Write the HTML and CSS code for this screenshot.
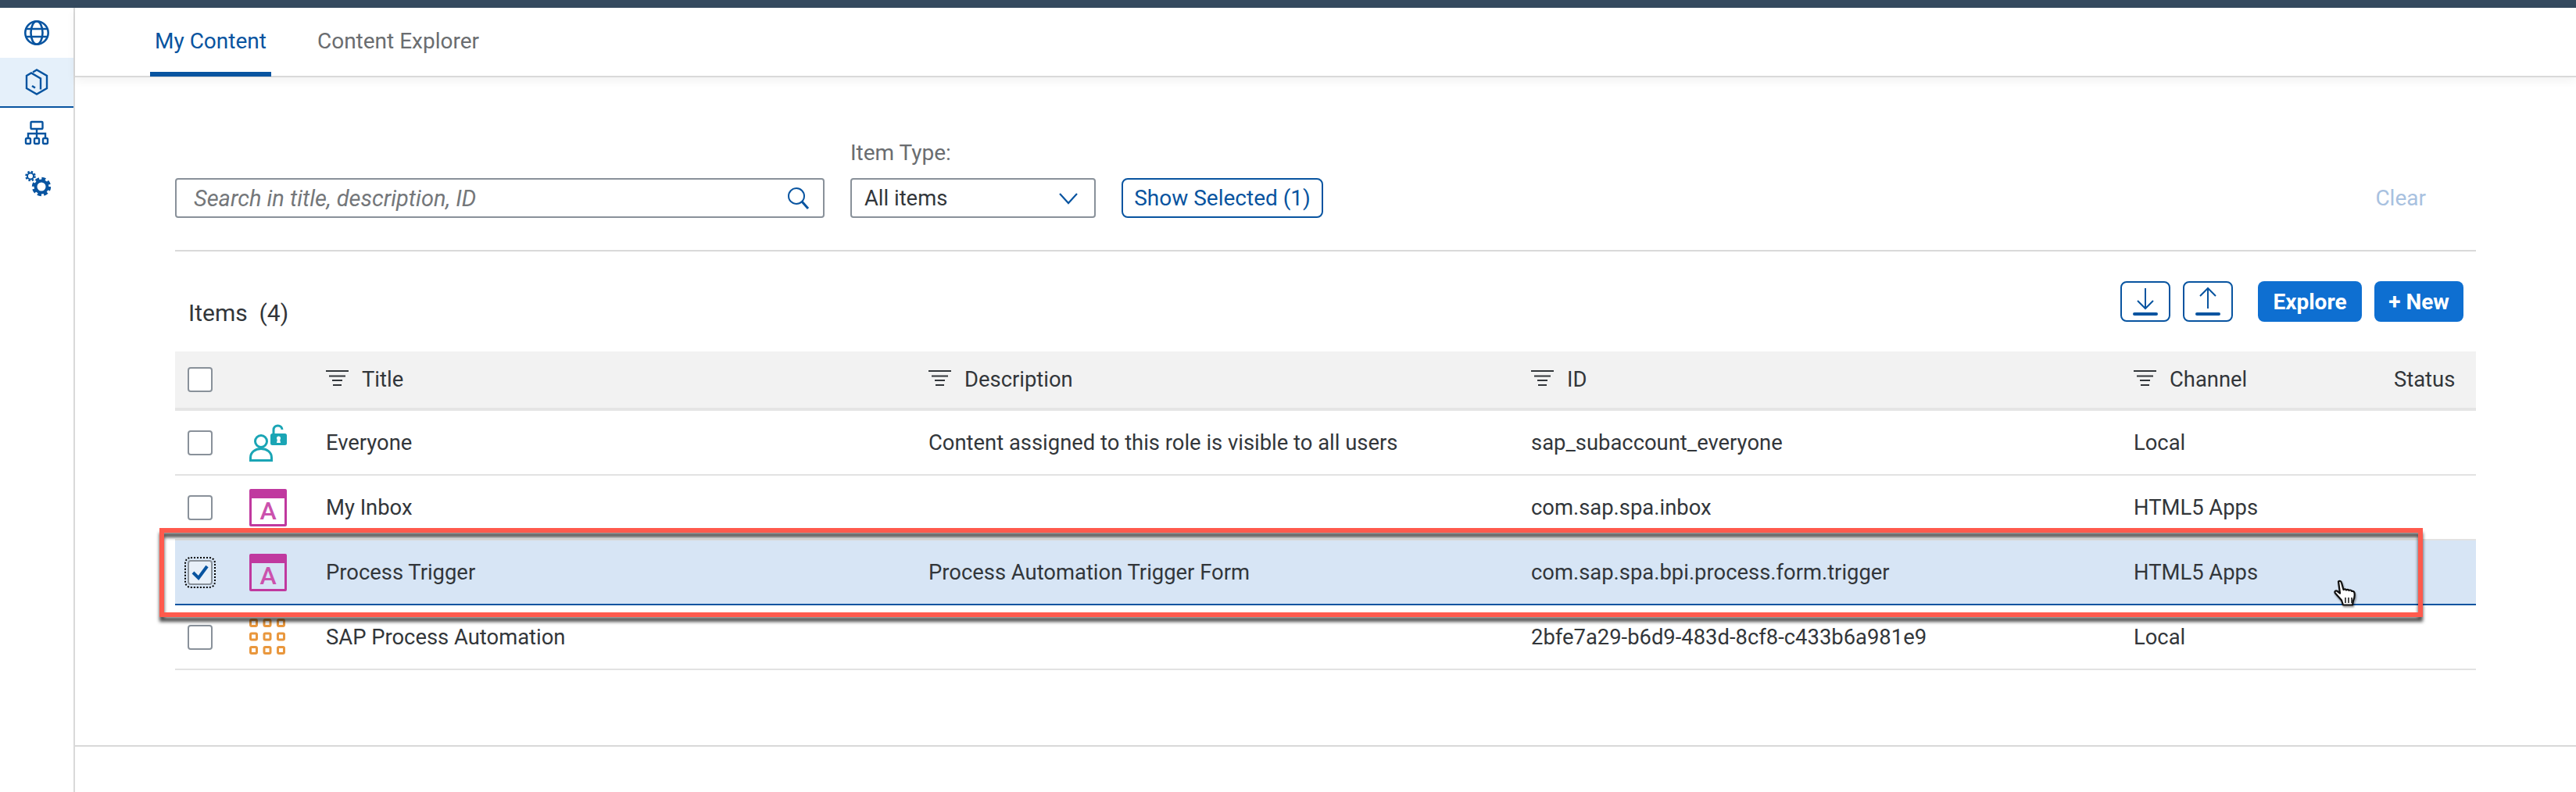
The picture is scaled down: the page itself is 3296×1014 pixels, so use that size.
FILE: index.html
```html
<!DOCTYPE html>
<html lang="en">
<head>
  <meta charset="UTF-8">
  <title>Content Manager</title>
  <link rel="stylesheet" href="styles.css">
</head>
<body>
  <div class="topbar"></div>
  <div class="layout">
    <nav class="sidenav">
      <div class="navitem">
        <svg width="36" height="36" viewBox="0 0 36 36" fill="none" stroke="#0854a0" stroke-width="2.6">
          <circle cx="18" cy="18" r="14.7"/>
          <ellipse cx="18" cy="18" rx="7.5" ry="14.7"/>
          <path d="M4 13h28M4 23h28"/>
        </svg>
      </div>
      <div class="navitem active">
        <svg width="36" height="36" viewBox="0 0 36 36" fill="none" stroke="#0854a0" stroke-width="2.4">
          <path d="M13 5.5l5-3 13 7.5v16l-13 7.5-13-7.5v-16l6-3.5 12 7v14"/>
          <path d="M12 23l4 2.5" stroke-width="2.6"/>
        </svg>
      </div>
      <div class="navitem">
        <svg width="36" height="36" viewBox="0 0 36 36" fill="none" stroke="#0854a0" stroke-width="2.4">
          <rect x="10.5" y="4" width="15" height="9" rx="1"/>
          <path d="M18 13v11M7 24v-5h22v5"/>
          <rect x="4" y="25" width="6" height="7" rx="1.5"/>
          <rect x="15" y="25" width="6" height="7" rx="1.5"/>
          <rect x="26" y="25" width="6" height="7" rx="1.5"/>
        </svg>
      </div>
      <div class="navitem">
        <svg width="36" height="36" viewBox="0 0 36 36" fill="none" stroke="#0854a0">
          <circle cx="24" cy="23" r="7.5" stroke-width="4"/>
          <circle cx="24" cy="23" r="10.5" stroke-width="3.4" stroke-dasharray="5 3.25"/>
          <circle cx="10" cy="9.5" r="4" stroke-width="2"/>
          <circle cx="10" cy="9.5" r="5.6" stroke-width="2.4" stroke-dasharray="2.4 2"/>
        </svg>
      </div>
    </nav>

    <main class="content">
      <div class="tabs">
        <div class="tab selected">My Content</div>
        <div class="tab">Content Explorer</div>
      </div>

      <div class="filters">
        <div class="searchbox">
          <span class="placeholder">Search in title, description, ID</span>
          <svg width="30" height="30" viewBox="0 0 30 30" fill="none" stroke="#0854a0">
            <circle cx="12" cy="12" r="10" stroke-width="2"/>
            <path d="M19 19l8 9" stroke-width="3"/>
          </svg>
        </div>
        <div class="field">
          <label class="fieldlabel">Item Type:</label>
          <div class="selectbox">
            <span>All items</span>
            <svg width="26" height="16" viewBox="0 0 26 16" fill="none" stroke="#0854a0" stroke-width="2.2">
              <path d="M2 2l11 12L24 2"/>
            </svg>
          </div>
        </div>
        <div class="btn-outline">Show Selected (1)</div>
        <div class="clear">Clear</div>
      </div>

      <div class="toolbar">
        <div class="items-title">Items&nbsp; (4)</div>
        <div class="icon-btn">
          <svg width="34" height="38" viewBox="0 0 34 38" fill="none" stroke="#0854a0">
            <path d="M17 2v26M7 18l10 10 10-10" stroke-width="2"/>
            <path d="M3 35h28" stroke-width="4" stroke-linecap="round"/>
          </svg>
        </div>
        <div class="icon-btn">
          <svg width="34" height="38" viewBox="0 0 34 38" fill="none" stroke="#0854a0">
            <path d="M17 28V2M7 12L17 2l10 10" stroke-width="2"/>
            <path d="M3 35h28" stroke-width="4" stroke-linecap="round"/>
          </svg>
        </div>
        <div class="btn-primary explore">Explore</div>
        <div class="btn-primary new">+ New</div>
      </div>

      <div class="table">
        <div class="row head">
          <div><span class="checkbox"></span></div>
          <div></div>
          <div class="th"><svg class="sorticon" width="29" height="20" viewBox="0 0 29 20"><path d="M0 1h29M4 7.500h21M8 13h13M9 19h11" stroke="#32363a" stroke-width="2"/></svg>Title</div>
          <div class="th"><svg class="sorticon" width="29" height="20" viewBox="0 0 29 20"><path d="M0 1h29M4 7.500h21M8 13h13M9 19h11" stroke="#32363a" stroke-width="2"/></svg>Description</div>
          <div class="th"><svg class="sorticon" width="29" height="20" viewBox="0 0 29 20"><path d="M0 1h29M4 7.500h21M8 13h13M9 19h11" stroke="#32363a" stroke-width="2"/></svg>ID</div>
          <div class="th"><svg class="sorticon" width="29" height="20" viewBox="0 0 29 20"><path d="M0 1h29M4 7.500h21M8 13h13M9 19h11" stroke="#32363a" stroke-width="2"/></svg>Channel</div>
          <div>Status</div>
        </div>

        <div class="row">
          <div><span class="checkbox"></span></div>
          <div class="icon-cell">
            <svg width="48" height="48" viewBox="0 0 48 48" fill="none" stroke="#1aa5b5">
              <circle cx="15" cy="22" r="7.500" stroke-width="3"/>
              <path d="M1.500 48v-5c0-7 6-11.500 13.500-11.500S28.500 36 28.500 43v5zM0 46.500h30" stroke-width="3"/>
              <path d="M31 13V7.500C31 4 33.500 2 36.500 2s5.500 2 5.500 5" stroke-width="3"/>
              <rect x="27" y="12" width="21" height="15" rx="2.500" fill="#1aa5b5" stroke="none"/>
              <circle cx="37.500" cy="18" r="2.500" fill="#fff" stroke="none"/>
              <path d="M36 19h3l1 5h-5z" fill="#fff" stroke="none"/>
            </svg>
          </div>
          <div>Everyone</div>
          <div>Content assigned to this role is visible to all users</div>
          <div>sap_subaccount_everyone</div>
          <div>Local</div>
          <div></div>
        </div>

        <div class="row">
          <div><span class="checkbox"></span></div>
          <div class="icon-cell"><div class="appicon"><span>A</span></div></div>
          <div>My Inbox</div>
          <div></div>
          <div>com.sap.spa.inbox</div>
          <div>HTML5 Apps</div>
          <div></div>
        </div>

        <div class="row picked">
          <div>
            <span class="checkbox focused">
              <svg width="24" height="22" viewBox="0 0 24 22" fill="none" stroke="#0854a0" stroke-width="4">
                <path d="M3 11l7 7L21 3"/>
              </svg>
            </span>
          </div>
          <div class="icon-cell"><div class="appicon"><span>A</span></div></div>
          <div>Process Trigger</div>
          <div>Process Automation Trigger Form</div>
          <div>com.sap.spa.bpi.process.form.trigger</div>
          <div>HTML5 Apps</div>
          <div></div>
        </div>

        <div class="row">
          <div><span class="checkbox"></span></div>
          <div class="icon-cell">
            <svg width="48" height="48" viewBox="0 0 48 48" fill="none" stroke="#e9973d" stroke-width="3">
              <rect x="1.500" y="1.500" width="8" height="8" rx="1.500"/><rect x="19" y="1.500" width="8" height="8" rx="1.500"/><rect x="36.500" y="1.500" width="8" height="8" rx="1.500"/>
              <rect x="1.500" y="19" width="8" height="8" rx="1.500"/><rect x="19" y="19" width="8" height="8" rx="1.500"/><rect x="36.500" y="19" width="8" height="8" rx="1.500"/>
              <rect x="1.500" y="36.500" width="8" height="8" rx="1.500"/><rect x="19" y="36.500" width="8" height="8" rx="1.500"/><rect x="36.500" y="36.500" width="8" height="8" rx="1.500"/>
            </svg>
          </div>
          <div>SAP Process Automation</div>
          <div></div>
          <div>2bfe7a29-b6d9-483d-8cf8-c433b6a981e9</div>
          <div>Local</div>
          <div></div>
        </div>
      </div>

      <div class="footer-line"></div>
    </main>
  </div>

  <!-- callout drawn over the screenshot -->
  <div class="callout"></div>

  <svg class="hand" width="34" height="36" viewBox="0 0 34 36">
    <path d="M7 2.500c1.500-1.500 3.500-.5 4 1.500l2.500 9c1-1 3-1 3.500.5 1-1 3-1 3.500.5 1-.8 3-.8 3.500 1 1-.5 3 0 3.500 2 .5 3 0 7-1.500 10l-1 5.500H13l-2-6-8-9c-1.500-2 0-3.500 2-3l4 3z" fill="#fff" stroke="#111" stroke-width="2.200" stroke-linejoin="round"/>
    <path d="M16 23v7M20 23v7M24 23v7" stroke="#111" stroke-width="1.500"/>
  </svg>
</body>
</html>
```

FILE: styles.css
```css
* {
  box-sizing: border-box;
}

html, body {
  margin: 0;
  height: 100%;
}

body {
  font-family: Roboto, sans-serif;
  font-size: 28px;
  color: #32363a;
  background: #fff;
  overflow: hidden;
  display: flex;
  flex-direction: column;
}

.topbar {
  height: 10px;
  background: #354a5f;
}

.layout {
  flex: 1;
  display: flex;
}

.sidenav {
  width: 96px;
  border-right: 2px solid #d9d9d9;
}

.navitem {
  height: 64px;
  display: flex;
  align-items: center;
  justify-content: center;
}

.navitem.active {
  background: #e5f0fa;
  border-bottom: 2px solid #0854a0;
}

.content {
  flex: 1;
}

.tabs {
  height: 89px;
  padding-left: 96px;
  display: flex;
  gap: 53px;
  border-bottom: 2px solid #d9d9d9;
  box-shadow: 0 4px 12px rgba(0,0,0,0.06);
}

.tab {
  padding: 0 6px;
  line-height: 86px;
  color: #6a6d70;
  height: 88px;
}

.tab.selected {
  color: #0854a0;
  border-bottom: 6px solid #0854a0;
}

.filters {
  margin: 0 128px;
  height: 223px;
  padding-bottom: 41px;
  display: flex;
  align-items: flex-end;
  border-bottom: 2px solid #d9d9d9;
}

.searchbox, .selectbox {
  height: 51px;
  border: 2px solid #89919a;
  border-radius: 4px;
  display: flex;
  align-items: center;
  justify-content: space-between;
  background: #fff;
}

.searchbox {
  width: 831px;
  padding: 0 16px 0 22px;
}

.placeholder {
  font-size: 29px;
  font-style: italic;
  color: #74777a;
}

.field {
  margin-left: 33px;
}

.fieldlabel {
  display: block;
  color: #6a6d70;
  margin-bottom: 15px;
  line-height: 34px;
}

.selectbox {
  width: 314px;
  padding: 0 20px 0 16px;
  font-size: 27.4px;
}

.btn-outline {
  margin-left: 33px;
  width: 258px;
  height: 51px;
  border: 2px solid #0854a0;
  border-radius: 8px;
  color: #0854a0;
  display: flex;
  align-items: center;
  justify-content: center;
}

.clear {
  margin-left: auto;
  margin-right: 64px;
  line-height: 51px;
  color: #a8c1e0;
}

.toolbar {
  margin: 38px 144px 38px 128px;
  height: 52px;
  display: flex;
  align-items: center;
  gap: 16px;
}

.items-title {
  margin-left: 17px;
  margin-right: auto;
  font-size: 30px;
  padding-top: 28px;
}

.icon-btn {
  width: 64px;
  height: 52px;
  border: 2px solid #0854a0;
  border-radius: 8px;
  display: flex;
  align-items: center;
  justify-content: center;
}

.btn-primary {
  height: 52px;
  background: #0e6fd1;
  color: #fff;
  font-weight: 700;
  border-radius: 8px;
  display: flex;
  align-items: center;
  justify-content: center;
}

.btn-primary.explore {
  width: 133px;
  margin-left: 16px;
}

.btn-primary.new {
  width: 114px;
}

.table {
  margin: 0 128px;
  font-size: 27.4px;
}

.row {
  display: grid;
  grid-template-columns: 95px 98px 771px 771px 771px 333px 105px;
  align-items: center;
  height: 83px;
  border-bottom: 2px solid #e2e2e2;
}

.row.head {
  height: 76px;
  background: #f2f2f2;
  border-bottom: 4px solid #e5e5e5;
}

.row.picked {
  background: #d7e5f5;
  border-bottom-color: #0854a0;
}

.th {
  display: flex;
  align-items: center;
  gap: 17px;
}

.sorticon {
  margin-top: -4px;
}

.checkbox {
  display: flex;
  align-items: center;
  justify-content: center;
  width: 32px;
  height: 32px;
  margin-left: 16px;
  border: 2px solid #89919a;
  border-radius: 4px;
  background: #fff;
}

.checkbox.focused {
  outline: 2px dotted #000;
  outline-offset: 2px;
  background: #e8f0f9;
}

.icon-cell {
  display: flex;
}

.appicon {
  width: 48px;
  height: 48px;
  border: 3px solid #c0399f;
  border-top-width: 12px;
  border-radius: 2px;
  display: flex;
  align-items: center;
  justify-content: center;
}

.appicon span {
  font-size: 32px;
  font-weight: 500;
  line-height: 1;
  color: #cb52ad;
}

.footer-line {
  margin-top: 96px;
  height: 2px;
  background: #d9d9d9;
}

.callout {
  position: absolute;
  left: 204px;
  top: 676px;
  width: 2896px;
  height: 114px;
  border: 6px solid #ff5a4d;
  filter: drop-shadow(0 6px 2px rgba(0,0,0,0.7));
}

.hand {
  position: absolute;
  left: 2985px;
  top: 742px;
  filter: drop-shadow(1px 2px 1px rgba(0,0,0,0.4));
}
```
